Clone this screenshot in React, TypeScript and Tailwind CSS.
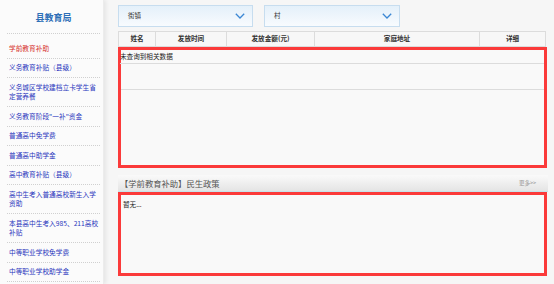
import React from 'react';

const menu = [
  { label: '学前教育补助', active: true },
  { label: '义务教育补贴（县级）' },
  { label: '义务城区学校建档立卡学生省定营养餐' },
  { label: '义务教育阶段"一补"资金' },
  { label: '普通高中免学费' },
  { label: '普通高中助学金' },
  { label: '高中教育补贴（县级）' },
  { label: '高中生考入普通高校新生入学资助' },
  { label: '本县高中生考入985、211高校补贴' },
  { label: '中等职业学校免学费' },
  { label: '中等职业学校助学金' },
];

const columns = [
  { title: '姓名', w: 'w-[37px]' },
  { title: '发放时间', w: 'w-[71px]' },
  { title: '发放金额(元)', w: 'w-[88px]' },
  { title: '家庭地址', w: 'w-[165px]' },
  { title: '详细', w: 'flex-1' },
];

const Chevron = () => (
  <svg width="10" height="6" viewBox="0 0 10 6" fill="none">
    <path d="M0.8 0.8l4.2 4.2L9.2 0.8" stroke="#3b87d4" strokeWidth="1.3" />
  </svg>
);

const Select = ({ label, w }: { label: string; w: string }) => (
  <div
    className={`${w} h-[22px] flex items-center justify-between pl-[9px] pr-[7px] border border-[#c7ddef] bg-gradient-to-b from-[#e4f0fa] to-[#f8fbfe] text-[6.5px] text-[#333]`}
  >
    <span>{label}</span>
    <Chevron />
  </div>
);

export default function App() {
  return (
    <div
      className="w-[554px] h-[284px] overflow-hidden flex bg-[#f6f6f6]"
      style={{ fontFamily: '"Noto Sans CJK SC", "Noto Sans", sans-serif' }}
    >
      {/* Sidebar */}
      <div className="w-[104px] shrink-0 h-full bg-[#fbfbfb] border-r border-[#ececec] shadow-[2px_0_4px_rgba(0,0,0,0.07)] pl-[7px] pr-[3px]">
        <div className="h-[34px] pt-[2px] flex items-center justify-center border-b border-dotted border-[#d0d0d0] text-[9px] font-bold text-[#2d6fb7]">
          县教育局
        </div>
        <ul className="mt-[5px]">
          {menu.map(item => (
            <li
              key={item.label}
              className={`py-[4.5px] pl-[2px] leading-[9.5px] text-[6.7px] border-b border-dotted border-[#d0d0d0] ${
                item.active ? 'text-[#d6302c]' : 'text-[#2a36bd]'
              }`}
            >
              {item.label}
            </li>
          ))}
        </ul>
      </div>

      {/* Main */}
      <div className="flex-1 pl-[14px] pr-[7px] pt-[5px]">
        <div className="flex gap-[11px]">
          <Select label="街镇" w="w-[135px]" />
          <Select label="村" w="w-[136px]" />
        </div>

        <div className="mt-[4px] w-[428px] h-[16px] flex border border-[#dcdcdc] bg-[#f7f7f7]">
          {columns.map((c, i) => (
            <div
              key={c.title}
              className={`${c.w} flex items-center justify-center text-[6.6px] font-bold text-[#333] ${
                i < columns.length - 1 ? 'border-r border-[#dcdcdc]' : ''
              }`}
            >
              {c.title}
            </div>
          ))}
        </div>

        <div className="w-[429px] h-[121px] border-[3px] border-[#fb3a3a] bg-[#f9f9f9]">
          <div className="h-[14px] border-b border-[#dcdcdc] flex items-center text-[6.6px] text-[#222] -ml-[1px]">
            未查询到相关数据
          </div>
          <div className="h-[26px] border-b border-[#dcdcdc]" />
        </div>

        <div className="mt-[7px] w-[430px] h-[17px] flex items-center justify-between pl-[2px] pr-[12px] bg-gradient-to-b from-[#fafafa] to-[#e4e4e4] border-b border-[#c6e3ea]">
          <span className="text-[8.3px] text-[#555]">【学前教育补助】民生政策</span>
          <span className="text-[5.5px] text-[#999]">更多&gt;&gt;</span>
        </div>

        <div className="w-[429px] h-[84px] border-[3px] border-[#fb3a3a] bg-[#f9f9f9] pl-[2px] pt-[5px] text-[6.6px] text-[#222] leading-[9px]">
          暂无...
        </div>
      </div>
    </div>
  );
}
